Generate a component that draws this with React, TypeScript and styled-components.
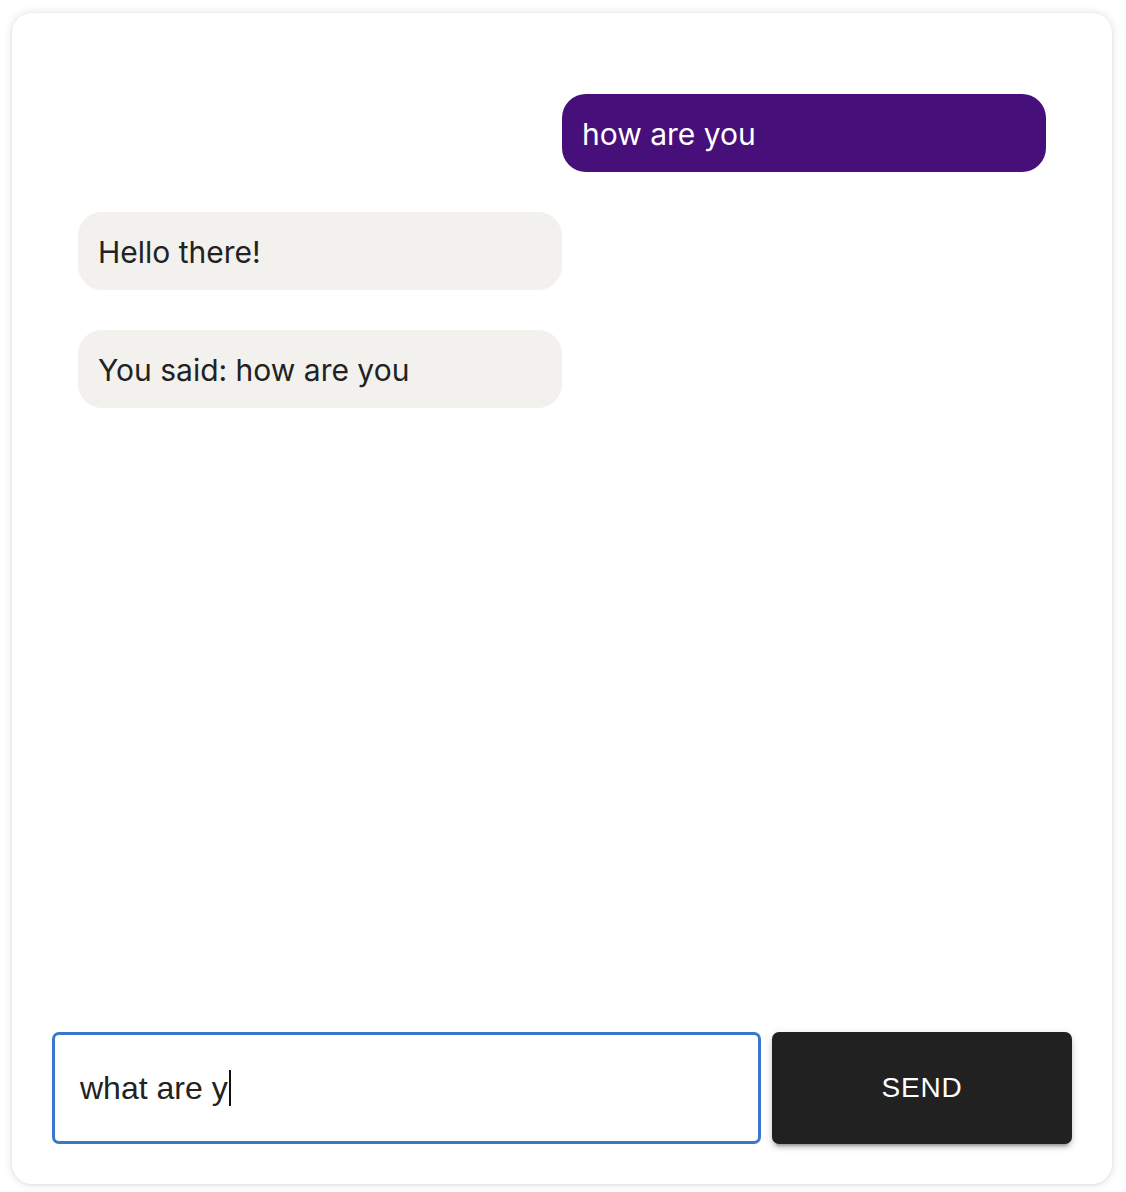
import styled, { createGlobalStyle } from 'styled-components';

type Message = { id: number; text: string; mine: boolean };

const messages: Message[] = [
  { id: 1, text: 'how are you', mine: true },
  { id: 2, text: 'Hello there!', mine: false },
  { id: 3, text: 'You said: how are you', mine: false },
];

const GlobalStyle = createGlobalStyle`
  html, body {
    margin: 0;
    padding: 0;
    background: #fff;
  }
`;

const Page = styled.div`
  padding: 13px 14px 8px 12px;
`;

const Card = styled.div`
  display: flex;
  flex-direction: column;
  height: 1171px;
  box-sizing: border-box;
  background: #fff;
  border-radius: 20px;
  box-shadow: 0 0 10px rgba(0, 0, 0, 0.13), 0 1px 3px rgba(0, 0, 0, 0.06);
`;

const MessageList = styled.div`
  flex: 1;
  display: flex;
  flex-direction: column;
  gap: 40px;
  padding: 81px 66px 0;
`;

const Bubble = styled.div<{ $mine: boolean }>`
  align-self: ${(p) => (p.$mine ? 'flex-end' : 'flex-start')};
  box-sizing: border-box;
  width: 50%;
  height: 78px;
  padding: 21px 20px 19px;
  border-radius: 24px;
  background: ${(p) => (p.$mine ? '#460f7a' : '#f2f1ed')};
  color: ${(p) => (p.$mine ? '#fff' : '#222')};
  font-family: Inter, 'Noto Sans', sans-serif;
  font-size: 30px;
  line-height: 38px;
`;

const Composer = styled.div`
  display: flex;
  gap: 11px;
  padding: 0 40px 40px;
`;

const Field = styled.div`
  flex: 1;
  display: flex;
  align-items: center;
  height: 112px;
  box-sizing: border-box;
  padding: 0 25px;
  border: 3px solid #3a76c9;
  border-radius: 7px;
  font-family: Helvetica, 'Liberation Sans', Arial, sans-serif;
  font-size: 32px;
  color: #222;
`;

const Caret = styled.span`
  display: inline-block;
  width: 2px;
  height: 36px;
  margin-left: 1px;
  background: #111;
`;

const SendButton = styled.button`
  width: 300px;
  height: 112px;
  border: 0;
  border-radius: 7px;
  background: #212121;
  color: #fff;
  font-family: Helvetica, 'Liberation Sans', Arial, sans-serif;
  font-size: 28px;
  letter-spacing: 0.8px;
  text-transform: uppercase;
  cursor: pointer;
  box-shadow: 0 6px 2px -4px rgba(0, 0, 0, 0.2), 0 4px 4px 0 rgba(0, 0, 0, 0.14),
    0 2px 10px 0 rgba(0, 0, 0, 0.12);
`;

export default function App() {
  return (
    <Page>
      <GlobalStyle />
      <Card>
        <MessageList>
          {messages.map((m) => (
            <Bubble key={m.id} $mine={m.mine}>
              {m.text}
            </Bubble>
          ))}
        </MessageList>
        <Composer>
          <Field>
            what are y
            <Caret />
          </Field>
          <SendButton>Send</SendButton>
        </Composer>
      </Card>
    </Page>
  );
}
